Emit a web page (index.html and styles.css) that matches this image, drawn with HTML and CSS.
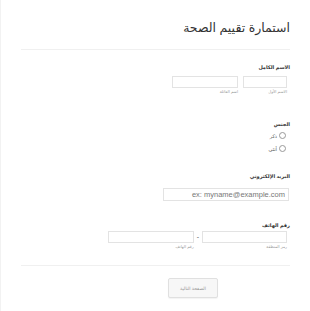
FILE: index.html
```html
<!DOCTYPE html>
<html lang="ar" dir="rtl">

<head>
    <meta charset="UTF-8">
    <meta name="viewport" content="width=device-width, initial-scale=1.0">
    <title>استمارة تقييم الصحة</title>
    <link rel="stylesheet" href="styles.css">
</head>

<body>
    <div class="form">
        <div class="header">
            <h2 class="title">استمارة تقييم الصحة</h2>
        </div>

        <div class="field name">
            <div class="label">الاسم الكامل</div>
            <div class="inputs">
                <div class="part first">
                    <div class="box"></div>
                    <div class="sublabel">الاسم الأول</div>
                </div>
                <div class="part last">
                    <div class="box"></div>
                    <div class="sublabel">اسم العائلة</div>
                </div>
            </div>
        </div>

        <div class="field gender">
            <div class="label">الجنس</div>
            <div class="radio"><span class="circle"></span>ذكر</div>
            <div class="radio"><span class="circle"></span>أنثى</div>
        </div>

        <div class="field email">
            <div class="label">البريد الإلكتروني</div>
            <div class="box wide"><span class="placeholder">ex: myname@example.com</span></div>
        </div>

        <div class="field phone">
            <div class="label">رقم الهاتف</div>
            <div class="inputs">
                <div class="part area">
                    <div class="box"></div>
                    <div class="sublabel">رمز المنطقة</div>
                </div>
                <div class="dash">-</div>
                <div class="part number">
                    <div class="box"></div>
                    <div class="sublabel">رقم الهاتف</div>
                </div>
            </div>
        </div>

        <div class="footer">
            <div class="next">الصفحة التالية</div>
        </div>
    </div>
</body>

</html>
```

FILE: styles.css
```css
body {
    margin: 0;
    background-color: white;
    font-family: "Liberation Sans", "DejaVu Sans", sans-serif;
    color: #2c3345;
}

.form {
    padding: 0 20px;
    min-height: 311px;
    border-left: 1px solid #f2f2f2;
    box-sizing: border-box;
}

.header {
    padding-top: 18px;
    padding-bottom: 11px;
    border-bottom: 1px solid #f0f0f0;
}

.title {
    margin: 0;
    font-size: 12.5px;
    line-height: 20px;
    font-weight: normal;
    color: #333;
}

.label {
    font-size: 5px;
    line-height: 10px;
    font-weight: bold;
    color: #333;
}

.inputs {
    display: flex;
    align-items: flex-start;
    gap: 5px;
    margin-top: 4px;
    margin-right: 3px;
}

.box {
    height: 12px;
    border: 1px solid #e3e3e3;
    box-sizing: border-box;
    background: white;
}

.sublabel {
    font-size: 4px;
    line-height: 8px;
    color: #999;
}

/* full name */
.name {
    margin-top: 12px;
}

.first {
    width: 44px;
}

.last {
    width: 66px;
}

/* gender */
.gender {
    margin-top: 23px;
}

.radio {
    display: flex;
    align-items: center;
    gap: 2px;
    font-size: 5px;
    height: 13px;
    color: #555;
    margin-right: 4px;
}

.radio:first-of-type {
    margin-top: 2px;
}

.circle {
    width: 7px;
    height: 7px;
    border: 1px solid #999;
    border-radius: 50%;
    box-sizing: border-box;
}

/* email */
.email {
    margin-top: 16px;
}

.wide {
    width: 126px;
    height: 13px;
    margin-top: 7px;
    margin-right: 1px;
    display: flex;
    align-items: center;
    padding: 0 3px;
}

.placeholder {
    font-size: 7.5px;
    color: #777;
}

/* phone */
.phone {
    margin-top: 19px;
}

.phone .inputs {
    gap: 3px;
    margin-top: 1px;
}

.inputs .area {
    width: 85px;
}

.inputs .number {
    width: 86px;
}

.dash {
    font-size: 7px;
    line-height: 12px;
    color: #555;
}

.footer {
    margin-top: 14px;
    border-top: 1px solid #f0f0f0;
    padding-top: 12px;
    display: flex;
}

.next {
    width: 50px;
    height: 20px;
    margin-right: 72px;
    border: 1px solid #e0e0e0;
    border-radius: 2px;
    background: #f7f7f7;
    box-sizing: border-box;
    display: grid;
    place-items: center;
    font-size: 4.5px;
    color: #999;
    box-shadow: 0 1px 1px rgba(0, 0, 0, 0.05);
}
```
